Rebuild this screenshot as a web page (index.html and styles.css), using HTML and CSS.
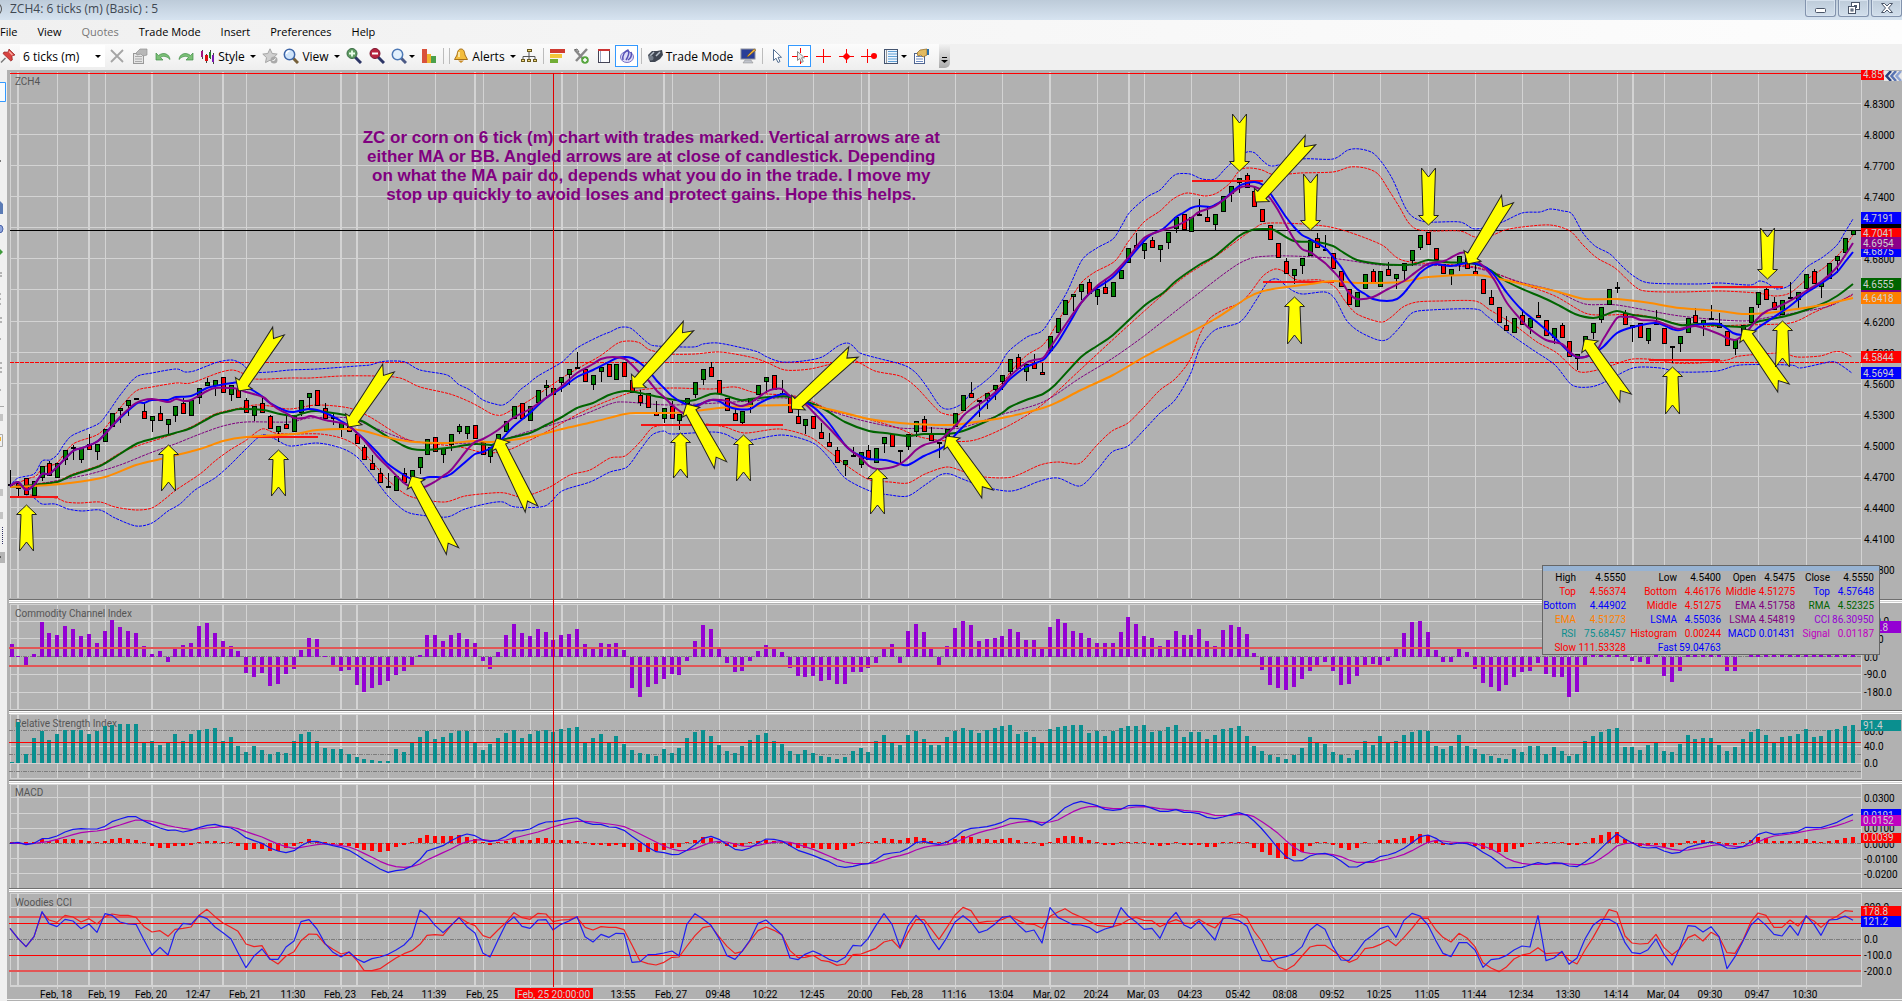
FILE: index.html
```html
<!DOCTYPE html>
<html lang="en">
<head>
  <meta charset="UTF-8" />
  <meta name="viewport" content="width=device-width, initial-scale=1.0"/>
  <title>ZCH4: 6 ticks (m) (Basic) : 5</title>
  <link rel="stylesheet" href="styles.css">
</head>
<body>

  <header class="titlebar">
    <span class="title-ring"></span>
    <h1 class="title">ZCH4: 6 ticks (m) (Basic) : 5</h1>
    <div class="window-buttons">
      <button class="window-button" aria-label="Minimize">
        <svg width="14" height="12" viewBox="0 0 14 12"><rect x="1.5" y="6.5" width="10" height="4" rx="1" fill="#fff" stroke="#4a5568"/></svg>
      </button>
      <button class="window-button" aria-label="Restore">
        <svg width="14" height="12" viewBox="0 0 14 12"><g fill="#fff" stroke="#4a5568"><rect x="4.5" y=".5" width="8" height="7"/><rect x="7.5" y="3.5" width="2" height="2"/><rect x="1.5" y="4.5" width="7" height="7"/><rect x="4" y="7" width="2" height="2" fill="#b7c6d6"/></g></svg>
      </button>
      <button class="window-button" aria-label="Close">
        <svg width="14" height="12" viewBox="0 0 14 12"><path d="M1.5 1.5h3l2.5 2.5 2.5-2.5h3l-4 4.500 4 4.500h-3l-2.500-2.500-2.500 2.500h-3l4-4.500z" fill="#fff" stroke="#4a5568"/></svg>
      </button>
    </div>
  </header>

  <nav class="menubar">
    <a href="#">File</a>
    <a href="#">View</a>
    <a href="#" class="disabled">Quotes</a>
    <a href="#">Trade Mode</a>
    <a href="#">Insert</a>
    <a href="#">Preferences</a>
    <a href="#">Help</a>
  </nav>

  <div class="toolbar">
    <button class="tool pin" aria-label="Pin">
      <svg viewBox="0 0 16 16"><path d="M9 1l6 6-2 .5-1 1 .3 3.5-1.5 1L3 5.5 4 4l3.500.2L8.500 3z" fill="#d8433f" stroke="#8e1d1d" stroke-width=".7"/><path d="M5.5 10L1 14.5" stroke="#777" stroke-width="1.5"/><path d="M9 3.5l3.5 3.5" stroke="#f7a8a0" stroke-width="1.5"/></svg>
    </button>
    <div class="interval">
      <select aria-label="Interval"><option>6 ticks (m)</option></select>
    </div>
    <button class="tool" aria-label="Delete">
      <svg viewBox="0 0 16 16"><path d="M2 2l12 12M14 2L2 14" stroke="#a5a5a5" stroke-width="1.8"/></svg>
    </button>
    <button class="tool" aria-label="Properties">
      <svg viewBox="0 0 16 16"><rect x="1.5" y="5.5" width="10" height="10" fill="#e4e4e4" stroke="#999"/><path d="M3 8.5h7M3 11h7M3 13.5h7" stroke="#aaa"/><path d="M4 5l4-4h7v6l-4 1-2-2-4 1z" fill="#b8b8b8" stroke="#929292" stroke-width=".7"/></svg>
    </button>
    <button class="tool" aria-label="Undo">
      <svg viewBox="0 0 16 16"><path d="M1 5v7h7l-2.500-2.500c2.500-2 6-1.500 9.500 2-.5-5.500-6.500-8-11.500-4z" fill="#7cc077" stroke="#3f8c46" stroke-width=".7"/></svg>
    </button>
    <button class="tool" aria-label="Redo">
      <svg viewBox="0 0 16 16"><path d="M15 5v7H8l2.500-2.500c-2.500-2-6-1.500-9.500 2 .5-5.500 6.500-8 11.500-4z" fill="#7cc077" stroke="#3f8c46" stroke-width=".7"/></svg>
    </button>
    <button class="tool labelled">
      <svg viewBox="0 0 16 16"><path d="M3.500 2v9M7.500 6v9M11.500 2v9M14.500 5v11" stroke="#444"/><path d="M2 3h2v6H2z" fill="#a1187e"/><path d="M6 7h3v6H6z" fill="#d11"/><path d="M10 4h2v6h-2z" fill="#20842a"/><path d="M13 7h2v7h-2z" fill="#7a1bb0"/></svg>
      Style <i class="caret"></i>
    </button>
    <button class="tool" aria-label="Favourite">
      <svg viewBox="0 0 16 16"><path d="M8 .8l2.2 4.700 5 .6-3.700 3.500 1 5L8 12.200l-4.500 2.400 1-5L.8 6.100l5-.6z" fill="#d0d0d0" stroke="#a5a5a5"/><circle cx="12" cy="12" r="3.5" fill="#aaa"/><path d="M10.5 12l1 1 2-2.500" stroke="#fff" fill="none"/></svg>
    </button>
    <button class="tool labelled">
      <svg viewBox="0 0 16 16"><path d="M10 10l5 5" stroke="#76603a" stroke-width="3"/><circle cx="6.5" cy="6.5" r="5.2" fill="#cfe4fa" stroke="#3e66a8" stroke-width="1.5"/><path d="M3.5 6a3 3 0 0 1 3-3" stroke="#fff" stroke-width="1.5" fill="none"/></svg>
      View <i class="caret"></i>
    </button>
    <button class="tool" aria-label="Zoom in">
      <svg viewBox="0 0 16 16"><path d="M9 9l6 6" stroke="#2c3566" stroke-width="3"/><circle cx="6" cy="5.5" r="5" fill="#5f9b62" stroke="#3b6c46"/><path d="M3 5.5h6M6 2.5v6" stroke="#eaffea" stroke-width="1.8"/></svg>
    </button>
    <button class="tool" aria-label="Zoom out">
      <svg viewBox="0 0 16 16"><path d="M9 9l6 6" stroke="#2c3566" stroke-width="3"/><circle cx="6" cy="5.5" r="5" fill="#b9243f" stroke="#7c1731"/><path d="M3 5.5h6" stroke="#fff" stroke-width="2"/></svg>
    </button>
    <button class="tool narrow-menu" aria-label="Zoom">
      <svg viewBox="0 0 16 16"><path d="M10 10l5 5" stroke="#4c5a86" stroke-width="3"/><circle cx="6.5" cy="6.5" r="5.2" fill="#e3f1fd" stroke="#4c78b5" stroke-width="1.5"/></svg>
      <i class="caret"></i>
    </button>
    <button class="tool" aria-label="Volume">
      <svg viewBox="0 0 16 16"><path d="M1 1h5v14H1z" fill="#d9513b"/><path d="M6 6h4v9H6z" fill="#efb52e"/><path d="M10 8h5v7h-5z" fill="#4ca04a"/></svg>
    </button>
    <span class="separator"></span>
    <span class="separator"></span>
    <button class="tool labelled alerts">
      <svg viewBox="0 0 16 16"><path d="M8 1c3 0 3.500 3 4 6l2.500 4.500h-13L4 7c.5-3 1-6 4-6z" fill="#f3bd3d" stroke="#a6701a"/><path d="M5 12.500h6L8 15z" fill="#c98a26"/><path d="M6 4v5" stroke="#fff3bf" stroke-width="1.5"/></svg>
      Alerts <i class="caret"></i>
    </button>
    <button class="tool" aria-label="Hierarchy">
      <svg viewBox="0 0 16 16"><path d="M8 3v6M2 11V8.500h12V11M8 8v3" stroke="#555" fill="none"/><g fill="#f1d77b" stroke="#6b5b20"><rect x="6.500" y="1.500" width="4" height="2"/><rect x=".5" y="11.500" width="3" height="2"/><rect x="6.500" y="11.500" width="3" height="2"/><rect x="12.500" y="11.500" width="3" height="2"/></g></svg>
    </button>
    <span class="separator"></span>
    <button class="tool" aria-label="Levels">
      <svg viewBox="0 0 16 16"><path d="M0 1h15v4H0z" fill="#cf3a30"/><path d="M0 6h12v4H0z" fill="#f2c63b"/><path d="M0 11h8v4H0z" fill="#71ad35"/></svg>
    </button>
    <button class="tool" aria-label="Add tool">
      <svg viewBox="0 0 16 16"><path d="M2 2l9 10M14 1L3 13" stroke="#888" stroke-width="2.5"/><path d="M1 2l3-1 2 3" stroke="#666" fill="none"/><circle cx="12" cy="12" r="3.8" fill="#56a53e"/><path d="M10 12h4M12 10v4" stroke="#fff" stroke-width="1.5"/></svg>
    </button>
    <button class="tool" aria-label="Notebook">
      <svg viewBox="0 0 16 16"><rect x="2.5" y="1.5" width="11" height="13" fill="#fdfdff" stroke="#445"/><path d="M2 2h12" stroke="#c33" stroke-width="2"/><path d="M4.500 3v11" stroke="#9aa5c0"/></svg>
    </button>
    <button class="tool selected" aria-label="Lock scale">
      <svg viewBox="0 0 16 16"><ellipse cx="8" cy="9" rx="6.5" ry="5.5" fill="#dedcf7" stroke="#7a74c9"/><path d="M4 12c-1-5 2-9 5-10 2 2 0 7-2 10M9 12c3-2 4-5 3-8" fill="none" stroke="#5650b5" stroke-width="1.5"/></svg>
    </button>
    <span class="separator"></span>
    <button class="tool labelled trade">
      <svg viewBox="0 0 16 16"><path d="M1 7l4-4 5 0 5-1 1 5-3 4-5 3-5 0z" fill="#3f4652"/><path d="M3 8l4-4M9 8l4-4" stroke="#b7c0cb" stroke-width="1.5"/><circle cx="4" cy="10" r="2.5" fill="#737c88"/></svg>
      Trade Mode
    </button>
    <button class="tool" aria-label="Display">
      <svg viewBox="0 0 16 16"><rect x="1" y="1" width="14" height="10" fill="#2a3e97" stroke="#8b8f9b"/><path d="M5 12h6l2 3H3z" fill="#c0c3cc" stroke="#888" stroke-width=".5"/><path d="M14 1L8 7l-1 2 2-1 7-6z" fill="#f0b43c" stroke="#7b5517" stroke-width=".5"/></svg>
    </button>
    <span class="separator"></span>
    <button class="tool" aria-label="Pointer">
      <svg viewBox="0 0 16 16"><path d="M4.500 1.500v11l2.500-2.300 2 4.300 2-1-2-4.200h3.500z" fill="#fff" stroke="#536e91"/></svg>
    </button>
    <button class="tool selected" aria-label="Pointer crosshair">
      <svg viewBox="0 0 16 16"><path d="M8.500 0v5M8.500 11v5M0 8.500h5M12 8.500h4" stroke="#f00"/><path d="M5.500 3.500v9l2.200-2 1.800 4 1.800-1-1.800-3.700h3z" fill="#eee" stroke="#888"/></svg>
    </button>
    <button class="tool" aria-label="Crosshair">
      <svg viewBox="0 0 16 16"><path d="M8.500 1v14M1 8.500h15" stroke="#f00"/></svg>
    </button>
    <button class="tool" aria-label="Crosshair center">
      <svg viewBox="0 0 16 16"><path d="M8.500 1v14M1 8.500h15" stroke="#f00"/><path d="M8.500 4.500l4 4-4 4-4-4z" fill="#f00"/></svg>
    </button>
    <button class="tool" aria-label="Crosshair right">
      <svg viewBox="0 0 16 16"><path d="M6.500 1v14M0 8.500h14" stroke="#f00"/><circle cx="13" cy="8" r="3" fill="#f00"/></svg>
    </button>
    <button class="tool narrow-menu" aria-label="Template">
      <svg viewBox="0 0 16 16"><rect x="1.5" y="1.5" width="13" height="14" fill="#eef5fd" stroke="#44546f"/><path d="M5 3.500h9M5 6h9M5 8.500h9M5 11h9M5 13.500h9" stroke="#5fa0d6"/><path d="M3.500 2v13" stroke="#999"/></svg>
      <i class="caret"></i>
    </button>
    <button class="tool" aria-label="Chart properties">
      <svg viewBox="0 0 16 16"><rect x="1.5" y="5.5" width="10" height="10" fill="#fff" stroke="#4f648f"/><path d="M3 8.500h7M3 11h7M3 13.500h7" stroke="#6c8ac0"/><path d="M4 5l3-3 7-1v6l-4 2-2-2-3 1z" fill="#e2bb62" stroke="#8b6420" stroke-width=".7"/><path d="M14 1h2v6h-2z" fill="#2b6fa8"/></svg>
    </button>
    <button class="overflow" aria-label="More">
      <svg viewBox="0 0 11 22"><path d="M3 13.500h5" stroke="#000"/><path d="M2 16h7l-3.500 3z"/></svg>
    </button>
  </div>

  <main class="workspace">
    <aside class="sidebar">
      <svg width="7" height="520" viewBox="0 0 7 520">
        <path d="M0 12.500h5.500v19H0" fill="#f7fbff" stroke="#3399ff"/>
        <path d="M0 91h1" stroke="#000"/>
        <path d="M0 131l3 3v10H0z" fill="#5b7bb5"/>
        <circle cx="-1" cy="159" r="4" fill="#8fa5dc" stroke="#4a62a8"/>
        <path d="M0 179l3 3-3 3z" fill="#3e9a3b"/>
        <path d="M0 203h2M0 206h2M0 224h1M0 229h1M0 234h1M0 248h2M0 252h2M0 269h1M0 293h2M0 298h2M0 302h2M0 320h1" stroke="#777"/>
        <path d="M0 336.500h4M0 364.500h2.500v12H0" fill="none" stroke="#aaa"/>
        <path d="M0 367h1v4H0z" fill="#f0b030"/>
        <path d="M0 344h3v7H0zM0 419h3v7H0zM0 442h3v7H0z" fill="#c4c4c4"/>
        <path d="M2.500 457v17" stroke="#336" stroke-dasharray="1 1"/>
        <path d="M0 482h5v11H0z" fill="#b5b5b5"/><path d="M0 487h1" stroke="#000"/>
      </svg>
    </aside>

    <section class="charts">
      <svg class="panel price" id="pricePanel"></svg>
      <div class="splitter"></div>
      <svg class="panel cci" id="cciPanel"></svg>
      <div class="splitter"></div>
      <svg class="panel rsi" id="rsiPanel"></svg>
      <div class="splitter"></div>
      <svg class="panel macd" id="macdPanel"></svg>
      <div class="splitter"></div>
      <svg class="panel woodies" id="woodiesPanel"></svg>
      <svg class="panel time" id="timePanel"></svg>

      <div class="crosshair"></div>

      <p class="note">ZC or corn on 6 tick (m) chart with trades marked. Vertical arrows are at<br>either MA or BB. Angled arrows are at close of candlestick. Depending<br>on what the MA pair do, depends what you do in the trade. I move my<br>stop up quickly to avoid loses and protect gains. Hope this helps.</p>

      <button class="expand" aria-label="Expand">
        <svg width="18" height="10" viewBox="0 0 18 10"><g fill="none" stroke-width="2.5"><path d="M7 0L2.500 5 7 10" stroke="#27407e"/><path d="M12 0L7.500 5l4.500 5" stroke="#5873b2"/><path d="M17 0l-4.500 5 4.500 5" stroke="#8da3d3"/></g></svg>
      </button>

      <div class="values">
        <table>
          <tr><th>High</th><td>4.5550</td><th>Low</th><td>4.5400</td><th>Open</th><td>4.5475</td><th>Close</th><td>4.5550</td></tr>
          <tr><th class="red">Top</th><td class="red">4.56374</td><th class="red">Bottom</th><td class="red">4.46176</td><th class="red">Middle</th><td class="red">4.51275</td><th class="blue">Top</th><td class="blue">4.57648</td></tr>
          <tr><th class="blue">Bottom</th><td class="blue">4.44902</td><th class="red">Middle</th><td class="red">4.51275</td><th class="purple">EMA</th><td class="purple">4.51758</td><th class="green">RMA</th><td class="green">4.52325</td></tr>
          <tr><th class="orange">EMA</th><td class="orange">4.51273</td><th class="blue">LSMA</th><td class="blue">4.55036</td><th class="purple">LSMA</th><td class="purple">4.54819</td><th class="violet">CCI</th><td class="violet">86.30950</td></tr>
          <tr><th class="teal">RSI</th><td class="teal">75.68457</td><th class="red">Histogram</th><td class="red">0.00244</td><th class="blue">MACD</th><td class="blue">0.01431</td><th class="magenta">Signal</th><td class="magenta">0.01187</td></tr>
          <tr><th class="red">Slow</th><td class="red">111.53328</td><th class="blue">Fast</th><td class="blue">59.04763</td><th></th><td></td><th></th><td></td></tr>
        </table>
      </div>
    </section>
  </main>

  <script src="chart.js"></script>
</body>
</html>
```

FILE: styles.css
```css
* {
  margin: 0;
  padding: 0;
  box-sizing: border-box;
}

body {
  display: flex;
  flex-direction: column;
  min-height: 100vh;
  background: #f0f0f0;
  color: #000;
  font-family: "Open Sans", "Noto Sans", sans-serif;
  font-size: 12px;
  overflow-x: hidden;
}

button {
  border: none;
  background: none;
  font: inherit;
  color: inherit;
}

/* title bar */

.titlebar {
  display: flex;
  height: 20px;
  background: linear-gradient(#bdcbd9, #d6e3f0);
}

.title-ring {
  width: 10px;
  height: 12px;
  margin: 3px 8px 0 -8px;
  border: 1px solid #555;
  border-radius: 50%;
}

.title {
  font-size: 12px;
  font-weight: normal;
  line-height: 17px;
  color: #3f4852;
}

.window-buttons {
  display: flex;
  gap: 2px;
  margin-left: auto;
}

.window-button {
  display: flex;
  align-items: center;
  justify-content: center;
  width: 31px;
  height: 17px;
  border: 1px solid #8293ad;
  border-top: none;
  border-radius: 0 0 3px 3px;
  box-shadow: inset 0 0 0 1px #d7e2ee;
}

/* menu */

.menubar {
  display: flex;
  gap: 20px;
  height: 24px;
  background: linear-gradient(90deg, #f0f0f0, #fdfdfd);
  font-size: 11px;
}

.menubar a {
  line-height: 24px;
  color: #000;
  text-decoration: none;
  white-space: nowrap;
}

.menubar .disabled {
  color: #777;
}

/* toolbar */

.toolbar {
  display: flex;
  align-items: center;
  width: 950px;
  height: 26px;
  padding-bottom: 2px;
  background: linear-gradient(#fcfcfc, #eeeeee);
}

.tool {
  display: flex;
  flex: none;
  align-items: center;
  justify-content: center;
  width: 23px;
  height: 22px;
  white-space: nowrap;
}

.tool svg {
  flex: none;
  width: 16px;
  height: 16px;
}

.tool.pin {
  width: 20px;
  justify-content: flex-start;
}

.tool.labelled {
  width: 61px;
  gap: 3px;
}

.tool.alerts {
  width: 65px;
}

.tool.trade {
  width: 92px;
}

.tool.narrow-menu {
  width: 29px;
  gap: 2px;
}

.tool.selected {
  border: 1px solid #3399ff;
  background: #fff;
}

.caret {
  border: 3px solid transparent;
  border-top-color: #000;
  border-bottom: none;
}

.tool .caret {
  margin-left: 2px;
}

.narrow-menu .caret {
  margin-left: 0;
}

.interval {
  position: relative;
  width: 85px;
  height: 22px;
  background: #fff;
}

.interval select {
  appearance: none;
  width: 100%;
  height: 22px;
  padding-left: 3px;
  border: none;
  background: none;
  font: inherit;
}

.interval::after {
  content: "";
  position: absolute;
  top: 10px;
  right: 4px;
  border: 3px solid transparent;
  border-top-color: #000;
  border-bottom: none;
  pointer-events: none;
}

.separator {
  flex: none;
  width: 1px;
  height: 16px;
  margin: 0 2px 0 3px;
  background: #bcbcbc;
}

.overflow {
  width: 11px;
  height: 24px;
  margin-left: auto;
  border-radius: 0 0 5px 0;
  background: linear-gradient(#f3f3f3, #aaa);
}

/* workspace */

.workspace {
  display: flex;
  flex: 1;
}

.sidebar {
  flex: none;
  width: 7px;
}

.charts {
  position: relative;
  flex: 1;
  min-width: 0;
  background: #b1b1b1;
}

.panel {
  display: block;
  width: 100%;
  overflow: hidden;
  font-family: Roboto, "Liberation Sans", sans-serif;
  font-size: 10px;
}

.price { height: 529px; }
.cci { height: 107px; }
.rsi { height: 66px; }
.macd { height: 104px; }
.woodies { height: 95px; }

.time {
  height: 13px;
  border-bottom: 1px solid #f0f0f0;
}

.splitter {
  height: 4px;
  margin-left: 2px;
  border-top: 1px solid #6f6f6f;
  border-bottom: 1px solid #fff;
  background: linear-gradient(#fff 50%, #d2d2d2 50%);
}

.crosshair {
  position: absolute;
  top: 3px;
  left: calc(28.84% - 1px);
  width: 1px;
  height: 914px;
  background: #e00000;
}

.note {
  position: absolute;
  top: 58px;
  left: 34%;
  transform: translateX(-50%);
  font-family: "Liberation Sans", sans-serif;
  font-size: 17px;
  font-weight: bold;
  line-height: 19px;
  text-align: center;
  white-space: nowrap;
  color: #800080;
}

.expand {
  position: absolute;
  top: 1px;
  right: 0;
  width: 18px;
  height: 10px;
  background: #e6e6e6;
}

.expand svg {
  display: block;
}

/* values window */

.values {
  position: absolute;
  top: 495px;
  right: 22px;
  width: 338px;
  height: 90px;
  border: 1px solid #666;
  border-top: 6px solid #97b3d3;
  outline: 1px solid #666;
  outline-offset: -1px;
  background: #b1b1b1;
  font-family: Roboto, "Liberation Sans", sans-serif;
  font-size: 10px;
}

.values table {
  border-collapse: collapse;
  table-layout: fixed;
  width: 331px;
}

.values th,
.values td {
  height: 14px;
  font-weight: normal;
  line-height: 14px;
  text-align: right;
  white-space: nowrap;
}

.values th:nth-child(1) { width: 33px; }
.values td:nth-child(2) { width: 50px; }
.values th:nth-child(3) { width: 51px; }
.values td:nth-child(4) { width: 44px; }
.values th:nth-child(5) { width: 35px; }
.values td:nth-child(6) { width: 39px; }
.values th:nth-child(7) { width: 35px; }
.values td:nth-child(8) { width: 44px; }

.red { color: #ff0000; }
.blue { color: #0000ff; }
.purple { color: #800080; }
.green { color: #006400; }
.orange { color: #ff8000; }
.violet { color: #9400d3; }
.teal { color: #0a8f8f; }
.magenta { color: #c000c0; }

/* chart drawing */

.grid { stroke: #d3d3d3; stroke-width: 1; }
.grid.session { stroke-width: 2; }
.zero { stroke: #7d7d7d; stroke-width: 1; stroke-dasharray: 4 1 1 1; }
.level { stroke: #ff0000; stroke-width: 1; }
.level.thick { stroke: #e25555; stroke-width: 2; }
.stop { stroke: #f51414; stroke-width: 2; }
.last { stroke: #000; stroke-width: 1; }
.cursor { stroke: #ff0000; stroke-width: 1; stroke-dasharray: 4 1; }

.line { fill: none; stroke-linejoin: round; }
.average { stroke-width: 2; }
.band { stroke-width: 1; stroke-dasharray: 3 1; }
.arrow { fill: #ffff00; stroke: #222; stroke-width: 1; }

.candle { stroke: #000; stroke-width: 1; }
.caption { fill: #555; }
.tick { fill: #000; }
.tag-text { fill: #cfcfcf; }
```

FILE: chart.js
```js
const NS = "http://www.w3.org/2000/svg";

// natural canvas: bars start at x = 10, axis starts at x = 1861
const LEFT = 7;
const AXIS = 1861;
const BARS = 235;
const STEP = 7.876;

let scale = 1;
let axisX = AXIS;

const X = x => LEFT + (x - LEFT) * scale;
const barX = i => Math.round(X(10.3 + i * STEP) - 0.3);

const sessions = [18, 89, 152, 223, 341, 357, 475, 562, 664, 869, 1050, 1129, 1633];

// body top-bottom, h = high, l = low
const candles = `
r484-486h470 r483-489h481l496 r478-495 g481-496 g466-478l481 r463-476h461 g463-478 g450-460l465 g447-448h445l460 g448-460l463
r444-450h434 g444-452l460 g429-442 g413-427 g408-411l423 g400-406l416 r398-400 r411-419h403 g416-421l432 r413-421h406
g419-425l434 g406-416l422 r403-414h398 g400-416 g388-398l404 g382-386h378 g380-386l396 r377-393 g385-395l401 r388-398
r400-413h398 g406-416l421 r403-413h398 r416-429h415 g426-432l442 r424-429h415 g416-432 g400-413l416 g393-398l408 r390-406
r408-419h403 g417-418h413l425 g423-429l437 r423-432 r434-444 r447-460h445 r463-470h455 r473-483h468 r486-488h473 g476-491
r473-483h468 g470-477 g457-468l474 g439-455 r437-452 g448-455l463 g434-445l451 g426-432h424l434 g426-434l439 r425-439
r442-455 g447-457l463 g434-440 g421-432 g406-419 r403-419 g406-421 g390-403 g385-388h380l396 g388-395
g377-383l392 g369-375l385 g367-368h352 r369-382 g375-385l390 g367-372l382 r364-377 g364-380 r362-377 r380-393
r395-403h390l406 r393-408 r412-416h401 g408-419l423 r406-419h401 g414-421l430 g398-404 g382-395l398 g369-380l385 r367-377h362
r380-394 r398-411 r413-421h408 g411-423l426 g398-407l413 g385-395 g377-382l393 r375-390 r393-395h380 r397-413
r416-424h407 g419-426l434 r416-429 r432-439h423 r442-447h433 r450-463h447 g460-465l476 g455-457h447 g452-465l468 r450-460h445
g448-463 g437-444l453 r434-447 g450-451l463 g434-447l450 g421-432l437 r419-432h416 r434-441h427 g442-444l458 g429-438
g413-427 g395-411 r393-398h382 g400-401l417 g393-399l409 g385-390l400 g375-382l390 g359-372l375 r357-369h354 g364-372l381
r363-369h354 r372-375h363 g336-351 g318-333 g300-315 g294-297l311 g284-292l300 r282-294h279 g289-297l305 r287-294h280
g282-297 g270-279 g248-263 r245-248h233 g243-251l259 r240-248h237 g245-250l262 g232-243l249 g217-229l233 r214-230
g217-232 g214-215h199 r217-222h206 g214-225l230 g196-212 g186-194l202 g178-183l193 r175-188h173 r191-207 r209-222
r225-240 r243-258 r261-274h258 g269-276l284 g258-266l274 g240-256 r238-248h233 g249-250h235 r253-269 r271-287
r289-305 g292-307 g274-289 r271-284h269 g271-287 r269-276h262 g274-279l289 g263-271l281 g250-261l266 g235-248l250
r232-245 r248-260 r264-274 g269-275l285 g256-265l271 r254-269 r271-276h264 r279-294 r297-305h290 r307-323
r325-331h316 g318-333 r315-325h310 g318-328l334 r315-318h302 r320-336 g328-338l344 r325-338h323 r341-357 g354-359l370
g336-348 g323-333l339 g307-320l323 g289-305 g287-288h282l293 r313-325h310 g325-328l342 r323-338 g328-341l344 r323-324h310
r328-344 g346-347l363 g336-344l352 g318-333 r315-323h308 g320-325l336 r318-320h305 r323-328h313 r331-346 g339-349l355
g325-333 g307-323 g292-305l308 r289-300h286 r302-310h297 g300-315 g297-298h282 g292-300l308 g274-289 r271-284h269
g283-287l298 g263-279 g256-261l273 g238-253 g230-235`.trim().split(/\s+/);

const curves = [
  { color: "#0000ff", type: "band", pts: "10,486 18,478 34,474 42,461 50,460 57,455 65,443 73,435 98,424 107,414 121,394 136,377 152,373 176,369 185,372 194,371 207,366 218,362 232,360 242,364 252,372 270,372 290,370 317,369 357,366 370,365 380,362 390,361 405,362 420,370 447,375 458,384 470,390 483,400 495,404 503,405 512,399 520,390 528,384 538,376 562,362 577,348 600,336 610,332 618,328 624,327 632,329 648,343 657,346 693,347 703,344 718,343 743,348 758,352 767,357 782,362 803,361 822,357 838,346 847,343 853,346 860,353 877,358 897,363 908,367 917,374 927,387 940,406 950,409 963,403 972,391 983,383 997,370 1008,352 1027,337 1042,331 1053,315 1067,292 1082,260 1097,248 1113,239 1122,225 1130,212 1147,197 1160,190 1170,179 1177,174 1190,174 1202,179 1215,179 1225,169 1237,158 1247,152 1255,153 1263,161 1273,166 1302,159 1333,159 1348,150 1360,149 1373,153 1383,164 1393,180 1405,207 1413,217 1427,222 1460,222 1475,229 1500,223 1522,213 1540,212 1550,209 1563,211 1572,214 1583,233 1595,246 1610,254 1623,267 1635,277 1650,283 1697,284 1720,283 1750,285 1759,281 1767,283 1777,289 1790,285 1807,267 1823,257 1837,245 1845,232 1853,219" },
  { color: "#ff0000", type: "band", pts: "10,486 30,478 36,476 44,467 57,463 73,444 100,433 120,408 136,391 152,387 176,383 191,383 218,373 232,370 242,373 255,379 290,378 310,378 341,376 375,376 400,378 420,387 450,394 470,402 483,409 492,414 502,415 515,408 530,400 562,378 577,369 600,356 618,343 630,341 640,343 650,350 670,354 695,354 720,352 750,357 766,362 785,370 810,369 835,363 853,360 875,371 900,376 915,386 930,402 940,412 950,415 960,414 975,401 1000,385 1012,370 1027,355 1043,345 1055,327 1070,300 1082,282 1095,272 1115,261 1128,242 1144,222 1160,211 1173,199 1187,193 1205,196 1217,193 1230,183 1240,170 1250,168 1262,170 1275,175 1300,173 1333,172 1350,167 1365,168 1378,174 1390,192 1400,208 1408,222 1416,229 1430,231 1460,231 1475,237 1490,236 1505,230 1522,227 1550,225 1570,231 1583,245 1597,258 1615,268 1633,285 1645,291 1680,292 1720,291 1757,293 1775,296 1790,293 1806,280 1825,267 1840,253 1853,235" },
  { color: "#ff0000", type: "band", pts: "26,494 36,496 56,498 66,502 80,503 100,502 115,507 136,510 152,508 165,499 176,490 200,474 215,461 230,450 245,441 262,429 275,433 290,434 320,434 341,438 357,446 372,462 388,480 405,494 420,499 445,502 465,496 492,493 505,493 520,497 530,495 550,487 570,475 590,470 610,458 625,456 640,442 652,428 665,425 680,425 705,424 725,427 745,433 780,429 810,437 830,452 850,468 870,480 890,482 908,483 925,474 947,467 965,472 985,477 1012,477 1040,465 1058,462 1075,464 1083,461 1097,445 1112,431 1128,423 1144,407 1160,390 1175,379 1190,360 1200,334 1210,318 1225,309 1240,303 1250,293 1263,276 1275,269 1285,272 1297,280 1320,280 1335,287 1345,301 1357,314 1380,322 1390,318 1403,307 1417,302 1440,301 1475,301 1490,310 1513,324 1537,342 1557,353 1577,371 1593,371 1613,365 1633,359 1660,360 1673,363 1700,363 1727,360 1740,356 1780,353 1797,357 1820,356 1833,352 1842,352 1852,357" },
  { color: "#0000ff", type: "band", pts: "26,496 34,498 42,504 55,504 68,509 82,511 100,510 115,518 136,526 152,523 168,511 180,504 195,490 215,478 230,465 245,450 262,435 275,439 290,446 317,443 341,448 357,457 372,475 388,496 405,511 420,515 447,517 465,509 490,503 503,502 515,507 545,506 562,491 590,482 610,472 627,467 640,450 652,435 664,431 672,434 711,432 725,434 743,441 782,435 813,443 830,459 845,478 870,491 890,495 908,496 925,485 940,475 950,474 965,480 985,487 1012,491 1040,481 1058,478 1080,486 1097,470 1112,452 1128,446 1144,430 1160,413 1175,400 1190,375 1200,348 1215,330 1240,322 1255,302 1267,283 1277,279 1290,289 1302,294 1325,292 1335,299 1347,321 1360,332 1378,340 1388,339 1400,327 1412,313 1430,310 1475,309 1487,316 1510,334 1533,350 1555,365 1572,385 1590,387 1605,382 1633,368 1660,368 1680,372 1717,371 1740,365 1790,365 1800,368 1820,364 1835,362 1852,373" },
  { color: "#ff0000", type: "band", pts: "34,484 57,481 73,474 100,465 120,453 140,445 165,437 191,427 215,414 240,408 255,405 270,406 290,409 317,405 349,408 370,417 404,438 425,443 460,447 485,453 505,451 520,445 550,430 580,413 610,400 640,390 672,388 711,389 735,387 757,393 800,397 830,410 860,417 895,427 920,437 947,441 975,440 1010,425 1043,404 1080,370 1130,324 1180,280 1215,257 1252,230 1270,223 1330,227 1380,244 1405,261 1475,267 1520,283 1555,296 1585,313 1605,315 1640,315 1690,326 1742,325 1790,323 1815,312 1853,295" },
  { color: "#800080", type: "band", pts: "34,485 60,480 90,474 120,465 150,453 175,444 200,434 223,426 246,422 290,422 310,418 349,418 375,428 404,439 430,443 490,442 530,431 577,417 610,404 625,402 672,405 750,401 785,398 820,408 860,420 900,428 930,428 960,428 1000,415 1043,402 1080,378 1113,358 1144,336 1190,300 1240,263 1270,256 1330,258 1380,265 1420,265 1475,268 1520,282 1555,291 1585,304 1617,305 1680,316 1742,321 1770,317 1800,312 1830,306 1853,294" },
  { color: "#006400", type: "average", pts: "10,487 34,485 57,482 73,475 100,466 120,454 136,444 152,439 175,433 191,428 215,415 230,411 240,409 263,410 280,414 294,416 304,413 317,411 349,416 364,422 388,437 404,446 412,449 424,450 447,448 475,444 492,445 502,440 530,433 546,425 562,417 577,408 593,403 609,395 625,391 640,393 664,398 683,401 695,400 711,394 720,394 740,400 750,399 770,397 790,397 820,407 845,422 869,431 885,433 908,436 924,434 947,434 963,431 987,421 1002,413 1010,407 1026,400 1043,394 1055,385 1081,357 1097,346 1113,335 1144,306 1163,293 1176,281 1199,265 1215,256 1239,236 1252,230 1263,229 1274,230 1294,241 1317,242 1333,246 1341,251 1357,260 1380,264 1400,265 1415,264 1428,260 1444,262 1475,264 1490,270 1504,280 1520,288 1546,299 1560,306 1575,314 1593,318 1605,315 1617,311 1633,315 1656,318 1680,325 1700,324 1742,327 1760,321 1790,315 1822,304 1837,296 1853,284" },
  { color: "#ff8c00", type: "average", pts: "10,487 34,486 70,483 105,477 136,465 165,458 200,449 223,441 246,437 294,434 317,430 349,429 364,431 390,438 415,442 447,443 475,441 492,442 530,437 562,429 593,422 625,414 640,413 672,413 695,411 719,408 750,406 790,405 813,406 845,413 869,419 900,423 950,425 975,422 1002,418 1043,408 1060,401 1081,390 1113,375 1144,357 1176,340 1215,319 1247,298 1263,291 1286,287 1310,284 1333,281 1360,283 1400,282 1428,277 1475,275 1500,279 1522,284 1555,291 1585,299 1617,299 1650,303 1680,308 1719,311 1742,314 1767,313 1790,310 1822,305 1853,298" },
  { color: "#0000ff", type: "average", pts: "10,486 18,482 26,490 34,485 42,474 49,474 57,467 73,451 82,448 98,441 113,425 136,404 144,403 152,400 168,400 176,397 191,396 207,388 220,385 232,383 238,383 254,391 263,397 270,403 286,411 294,412 308,409 317,410 330,415 341,421 349,426 364,439 377,452 388,464 404,475 412,479 420,479 430,477 443,477 451,474 463,464 475,454 483,452 492,447 502,439 513,427 530,413 546,398 562,388 577,377 593,370 609,362 617,358 625,357 632,358 640,363 648,370 657,381 664,388 672,396 683,403 693,406 703,403 711,400 719,401 727,406 737,409 750,409 758,404 770,398 783,394 790,396 807,403 817,410 829,423 845,445 853,452 861,456 869,459 885,460 900,464 908,465 924,456 940,449 948,443 957,433 970,420 987,403 1002,388 1010,379 1026,367 1043,360 1050,352 1058,342 1070,322 1081,303 1089,294 1097,288 1113,277 1128,260 1144,241 1152,234 1163,229 1176,217 1183,213 1191,208 1199,206 1210,207 1215,205 1223,200 1231,193 1239,186 1247,183 1255,182 1263,185 1270,193 1278,205 1286,217 1294,227 1302,235 1310,239 1325,248 1333,257 1341,267 1349,280 1357,289 1365,294 1373,299 1387,301 1397,299 1404,293 1412,283 1420,273 1428,267 1436,264 1451,266 1467,263 1477,264 1487,268 1495,276 1507,293 1522,310 1538,323 1554,337 1570,353 1577,357 1585,357 1593,354 1603,347 1617,333 1633,327 1656,323 1672,329 1680,330 1696,325 1719,324 1733,333 1742,335 1750,334 1759,327 1774,317 1790,306 1806,293 1822,283 1837,272 1845,262 1853,252" },
  { color: "#8b008b", type: "average", pts: "10,486 18,482 26,490 34,485 42,474 49,474 57,467 73,451 82,448 98,441 113,425 120,417 136,403 152,399 168,402 176,399 184,401 191,400 207,391 215,388 230,388 238,389 246,392 263,397 270,403 278,409 286,413 294,418 304,418 311,416 325,420 341,423 349,426 357,433 364,440 377,456 388,467 404,483 412,487 424,487 436,481 443,476 451,470 467,450 475,442 483,439 498,430 513,418 530,409 546,398 562,386 577,373 593,364 601,359 613,357 625,359 632,365 640,373 648,380 657,391 664,397 672,405 683,413 690,412 703,403 711,400 727,401 740,406 750,403 766,392 774,389 782,389 790,396 803,402 817,416 829,428 845,445 853,452 861,458 869,466 877,469 893,467 900,464 908,458 916,450 924,445 940,440 948,433 957,424 963,416 970,410 987,399 1002,386 1010,376 1026,363 1034,360 1043,358 1050,348 1066,324 1081,303 1097,286 1113,274 1128,258 1144,238 1160,231 1176,226 1191,218 1199,212 1215,206 1231,194 1239,188 1247,186 1255,187 1263,191 1270,198 1278,210 1286,225 1294,239 1302,249 1310,252 1317,257 1325,263 1333,271 1341,280 1349,293 1357,299 1373,297 1388,289 1404,281 1412,275 1420,269 1428,264 1444,261 1452,257 1460,253 1466,253 1476,260 1487,270 1495,281 1507,303 1522,321 1530,329 1546,340 1562,344 1570,352 1577,357 1585,357 1597,350 1604,338 1617,318 1625,317 1633,317 1641,320 1656,321 1672,327 1680,329 1696,326 1719,334 1727,338 1735,340 1742,336 1750,328 1759,317 1767,311 1782,305 1798,296 1806,291 1822,281 1837,267 1853,243" }
];

// x1, x2, y
const stops = [[10, 58, 497], [247, 318, 437], [641, 783, 425], [1192, 1263, 181], [1263, 1334, 282], [1649, 1720, 360], [1712, 1783, 287]];

// tip x, tip y, tail x, tail y
const arrows = [
  [26, 505, 26, 551], [168, 445, 168, 491], [278, 450, 278, 496], [238, 391, 278, 331], [348, 427, 388, 368], [411, 476, 452, 551],
  [496, 438, 531, 509], [632, 388, 688, 326], [686, 404, 720, 465], [680, 433, 680, 478], [743, 435, 743, 481], [791, 409, 853, 352],
  [877, 469, 877, 514], [946, 436, 987, 494], [1239, 171, 1239, 114], [1255, 202, 1310, 140], [1310, 230, 1310, 174], [1294, 297, 1294, 344],
  [1428, 225, 1428, 168], [1467, 264, 1507, 199], [1767, 279, 1767, 228], [1672, 367, 1672, 414], [1584, 339, 1625, 398],
  [1742, 329, 1783, 388], [1782, 321, 1782, 367]
];

const cci = [
  13, 1, -9, 3, 35, 24, 22, 31, 28, 21, 23, 14, 26, 37, 30, 26, 24, 11, 3, 6, -5, 9, 12, 14, 31, 34, 24, 16, 11, 6,
  -16, -20, -16, -29, -27, -17, -12, 7, 19, 18, 1, -8, -14, -13, -28, -35, -31, -28, -24, -18, -14, -10, 2, 22, 22, 16, 22, 24, 18, 14,
  -4, -12, 5, 22, 33, 24, 21, 28, 25, 17, 22, 23, 28, 13, 8, 14, 13, 14, 7, -31, -40, -30, -27, -22, -17, -18, -4, 16, 32, 28,
  8, -6, -15, -14, -4, 6, 12, 9, 5, -11, -19, -20, -19, -24, -23, -27, -27, -15, -15, -11, -6, 8, 13, -6, 26, 33, 25, 9, -8, 11,
  29, 36, 32, 16, 18, 19, 21, 28, 25, 17, 17, 10, 30, 38, 34, 26, 24, 19, 14, 14, 14, 25, 40, 33, 21, 19, 11, 17, 26, 22,
  22, 28, 16, 11, 27, 32, 30, 23, 4, -13, -28, -31, -33, -30, -22, -14, -8, -5, -14, -28, -27, -19, -10, -7, -9, -4, 8, 24, 35, 36,
  25, 7, -5, -5, 10, 5, -12, -26, -30, -34, -28, -20, -15, -14, -6, -17, -20, -20, -40, -35, -10, 12, 20, 26, 22, 8, -4, -5, -7, 2,
  -19, -25, -14, 6, 8, 7, 9, 6, -14, -14, 0, 9, 17, 14, 5, 8, 11, 14, 20, 10, 9, 18, 22, 26, 25
];

const rsi = [
  1, 41, 9, 25, 32, 23, 29, 33, 33, 33, 29, 32, 37, 38, 39, 39, 39, 20, 22, 18, 20, 29, 22, 29, 33, 34, 35, 22, 26, 17,
  11, 17, 13, 9, 11, 10, 22, 29, 31, 22, 15, 14, 14, 9, 6, 4, 3, 2, 2, 14, 11, 20, 26, 32, 24, 26, 30, 32, 32, 20,
  13, 19, 25, 30, 33, 25, 29, 32, 33, 31, 34, 35, 36, 20, 25, 29, 20, 27, 19, 13, 10, 9, 7, 14, 10, 15, 25, 31, 33, 27,
  18, 12, 10, 17, 23, 28, 30, 22, 19, 12, 9, 13, 10, 7, 6, 4, 6, 12, 15, 11, 22, 28, 20, 18, 28, 32, 24, 18, 18, 26,
  32, 35, 33, 30, 33, 35, 37, 38, 29, 31, 26, 20, 34, 36, 37, 38, 38, 30, 32, 27, 32, 35, 37, 37, 38, 31, 32, 36, 38, 26,
  31, 31, 24, 28, 34, 35, 37, 27, 17, 12, 8, 6, 4, 8, 15, 26, 20, 19, 11, 8, 5, 13, 22, 18, 27, 20, 22, 28, 31, 33,
  32, 17, 14, 17, 28, 17, 14, 9, 7, 5, 4, 14, 11, 17, 17, 9, 16, 12, 7, 9, 22, 27, 31, 34, 35, 16, 16, 13, 18, 20,
  12, 11, 19, 28, 24, 25, 25, 18, 12, 16, 24, 31, 34, 28, 20, 26, 27, 29, 34, 26, 27, 33, 34, 37, 38
];

const histogram = [
  1, 1, 1, 1, 4, 2, 3, 4, 4, 3, 2, 1, 2, 4, 5, 4, 3, 1, -3, -5, -5, -3, -3, -2, 1, 2, 2, 1, 1, -3,
  -7, -6, -6, -8, -8, -5, -3, 1, 4, 2, 1, -1, -2, -3, -5, -7, -8, -9, -8, -4, -2, 1, 5, 8, 7, 7, 7, 8, 6, 4,
  1, -2, 1, 2, 5, 3, 3, 5, 5, 3, 3, 3, 2, 1, -2, -2, -3, -2, -4, -7, -9, -9, -8, -7, -5, -4, 1, 3, 6, 5,
  2, -3, -4, -3, 1, 2, 3, 2, 1, -3, -5, -5, -5, -6, -6, -7, -6, -3, 1, 1, 2, 5, 4, 3, 5, 6, 5, 2, 1, 2,
  4, 7, 6, 4, 4, 3, 4, 5, 3, 1, 1, -3, 1, 5, 7, 7, 6, 3, 1, -2, -2, 1, 1, 1, 1, -2, -3, -2, 1, -2,
  -2, -2, -4, -4, 1, 1, 1, 1, -5, -9, -12, -15, -16, -13, -9, -3, 1, 1, -2, -5, -7, -5, 1, 0, 3, 3, 4, 5, 7, 9,
  8, 2, -2, -1, 1, 1, -3, -6, -7, -9, -9, -6, -4, -1, 1, 1, 1, 1, -2, -2, 1, 5, 8, 11, 11, 4, 1, -3, -3, -2,
  -4, -4, -2, 2, 2, 3, 2, 1, -3, -2, 1, 3, 6, 5, 2, 2, 2, 2, 4, 2, 1, 2, 3, 5, 6
];

// line levels below are thirds of a pixel, measured down from y = 590
const macd = [
  760, 757, 764, 760, 746, 745, 738, 726, 718, 716, 717, 717, 709, 695, 687, 680, 680, 693, 704, 714, 721, 720, 726, 721, 713, 706, 703, 710, 714, 725,
  743, 752, 760, 774, 783, 788, 782, 767, 755, 754, 761, 767, 772, 781, 795, 809, 823, 837, 847, 842, 839, 828, 808, 783, 775, 767, 752, 740, 732, 737,
  750, 755, 750, 739, 723, 722, 717, 704, 696, 695, 691, 686, 684, 697, 703, 703, 711, 712, 721, 739, 755, 772, 785, 788, 794, 793, 781, 764, 745, 739,
  748, 763, 778, 781, 774, 760, 747, 748, 753, 767, 781, 788, 796, 806, 815, 828, 832, 829, 823, 821, 809, 793, 789, 786, 775, 758, 754, 760, 763, 756,
  742, 723, 715, 713, 710, 704, 697, 685, 686, 688, 695, 706, 690, 672, 653, 641, 634, 640, 647, 658, 661, 658, 647, 646, 647, 655, 664, 664, 659, 667,
  667, 671, 682, 686, 681, 674, 668, 676, 693, 717, 745, 775, 800, 813, 812, 798, 792, 790, 798, 813, 831, 831, 818, 812, 800, 795, 787, 775, 758, 740,
  735, 745, 759, 763, 759, 761, 770, 787, 800, 818, 834, 833, 832, 825, 818, 823, 818, 820, 828, 830, 816, 798, 775, 752, 732, 747, 758, 771, 774, 772,
  783, 790, 787, 772, 766, 760, 756, 762, 774, 775, 770, 755, 733, 726, 733, 731, 728, 724, 712, 713, 713, 705, 697, 684, 673
];

const signal = [
  760, 760, 761, 760, 757, 754, 748, 741, 734, 728, 725, 723, 719, 712, 705, 697, 690, 691, 694, 700, 707, 711, 715, 718, 717, 714, 712, 709, 711, 716,
  725, 733, 741, 752, 762, 770, 775, 772, 768, 764, 762, 764, 767, 771, 780, 790, 802, 814, 824, 830, 832, 830, 822, 810, 799, 788, 777, 764, 755, 750,
  749, 752, 752, 750, 744, 738, 732, 726, 718, 711, 704, 699, 694, 694, 696, 699, 702, 705, 710, 720, 732, 744, 756, 768, 777, 782, 781, 776, 766, 757,
  754, 756, 762, 768, 769, 766, 761, 757, 755, 757, 763, 770, 778, 788, 798, 808, 816, 820, 821, 821, 818, 810, 802, 797, 790, 780, 772, 768, 766, 764,
  758, 747, 736, 728, 721, 716, 710, 702, 697, 695, 694, 698, 696, 690, 678, 665, 655, 650, 650, 653, 656, 656, 654, 651, 650, 652, 656, 658, 658, 661,
  663, 665, 670, 676, 677, 676, 673, 674, 680, 695, 712, 730, 752, 772, 786, 790, 792, 791, 794, 800, 810, 817, 817, 817, 812, 807, 801, 793, 782, 769,
  757, 751, 753, 756, 758, 757, 760, 768, 777, 790, 804, 814, 820, 823, 823, 822, 821, 820, 822, 824, 824, 818, 805, 788, 768, 761, 759, 762, 766, 768,
  772, 778, 781, 780, 776, 772, 767, 764, 766, 769, 770, 765, 756, 745, 738, 735, 732, 728, 723, 719, 717, 713, 707, 699, 690
];

const fast = [
  1015, 1045, 1070, 1040, 965, 1001, 1010, 988, 993, 1016, 1002, 1027, 971, 976, 996, 1002, 1003, 1050, 1095, 1072, 1095, 1030, 1000, 1003, 977, 986, 1011, 1028, 1047, 1088,
  1133, 1098, 1077, 1108, 1108, 1071, 1053, 995, 989, 1017, 1060, 1087, 1101, 1086, 1107, 1117, 1106, 1101, 1093, 1080, 1065, 1040, 960, 976, 1006, 1028, 1006, 983, 1010, 1029,
  1090, 1101, 1050, 1001, 981, 1009, 1015, 990, 989, 1020, 1003, 993, 980, 1040, 1056, 1033, 1042, 1030, 1031, 1117, 1115, 1094, 1093, 1089, 1083, 1097, 1002, 971, 987, 1006,
  1045, 1097, 1108, 1084, 1050, 1000, 990, 1012, 1035, 1104, 1109, 1093, 1083, 1094, 1108, 1116, 1102, 1066, 1068, 1046, 1006, 971, 1003, 1072, 1008, 976, 1001, 1045, 1079, 1042,
  996, 977, 996, 1028, 1020, 1002, 982, 978, 1004, 1026, 1020, 1059, 953, 982, 992, 1004, 1005, 1012, 1028, 1017, 1010, 953, 978, 996, 1018, 1015, 1045, 993, 967, 1005,
  1015, 993, 1022, 1050, 984, 985, 992, 1009, 1060, 1111, 1114, 1105, 1100, 1091, 1070, 1020, 1003, 1018, 1070, 1110, 1111, 1085, 1052, 1035, 1016, 1008, 1042, 991, 970, 978,
  1005, 1053, 1090, 1100, 1058, 1058, 1080, 1132, 1109, 1106, 1097, 1080, 1068, 1071, 977, 1112, 1104, 1084, 1123, 1104, 1047, 1006, 988, 988, 1001, 1058, 1088, 1091, 1079, 1047,
  1093, 1125, 1072, 1007, 1009, 1026, 1010, 1040, 1136, 1100, 1053, 1005, 985, 1006, 1033, 1038, 1006, 1036, 977, 1003, 1036, 990, 988, 978, 991
];

const slow = [
  1015, 1045, 1070, 1040, 968, 990, 997, 976, 981, 996, 986, 1002, 980, 972, 976, 976, 982, 1010, 1026, 1022, 1039, 1018, 1015, 1011, 976, 958, 980, 999, 1012, 1024,
  1062, 1070, 1067, 1107, 1122, 1098, 1085, 1052, 1032, 1033, 1062, 1078, 1092, 1086, 1112, 1141, 1142, 1136, 1120, 1104, 1091, 1082, 1063, 1036, 1034, 1036, 1007, 982, 997, 1007,
  1037, 1044, 1020, 997, 968, 983, 988, 970, 972, 995, 990, 989, 982, 1012, 1020, 1010, 1012, 1012, 1019, 1065, 1113, 1121, 1125, 1117, 1102, 1101, 1068, 1037, 1013, 1008,
  1040, 1069, 1090, 1085, 1053, 1022, 1011, 1021, 1035, 1082, 1103, 1102, 1096, 1111, 1115, 1126, 1122, 1094, 1092, 1084, 1075, 1056, 1050, 1075, 1028, 989, 989, 1016, 1048, 1012,
  975, 952, 962, 998, 994, 993, 989, 978, 991, 1002, 1003, 1015, 979, 966, 956, 971, 981, 993, 1006, 1009, 1010, 1003, 990, 982, 991, 992, 1010, 998, 989, 999,
  1001, 988, 1003, 1014, 987, 975, 972, 985, 1023, 1055, 1100, 1131, 1140, 1126, 1098, 1071, 1066, 1066, 1082, 1100, 1117, 1107, 1076, 1072, 1064, 1050, 1067, 1042, 1015, 985,
  985, 1020, 1042, 1056, 1030, 1044, 1070, 1118, 1134, 1145, 1132, 1107, 1095, 1090, 1073, 1091, 1089, 1088, 1110, 1122, 1080, 1043, 1000, 959, 966, 1038, 1059, 1062, 1060, 1033,
  1073, 1094, 1076, 1043, 1034, 1053, 1027, 1040, 1088, 1090, 1050, 995, 969, 976, 1012, 1012, 990, 1008, 981, 993, 1012, 991, 979, 962, 964
];

const dates = ["Feb, 18", "Feb, 19", "Feb, 20", "12:47", "Feb, 21", "11:30", "Feb, 23", "Feb, 24", "11:39", "Feb, 25", "", "", "13:55",
  "Feb, 27", "09:48", "10:22", "12:45", "20:00", "Feb, 28", "11:16", "13:04", "Mar, 02", "20:24", "Mar, 03", "04:23", "05:42", "08:08",
  "09:52", "10:25", "11:05", "11:44", "12:34", "13:30", "14:14", "Mar, 04", "09:30", "09:47", "10:30"];

function add(parent, name, attrs, text) {
  const node = document.createElementNS(NS, name);
  for (const key in attrs) node.setAttribute(key, attrs[key]);
  if (text !== undefined) node.textContent = text;
  parent.appendChild(node);
  return node;
}

function startPanel(id, top) {
  const svg = document.getElementById(id);
  svg.innerHTML = "";
  return add(svg, "g", { transform: `translate(${-LEFT},${-top})` });
}

function hline(g, y, cls, x1 = LEFT + 2, x2 = axisX) {
  add(g, "line", { x1, x2, y1: y, y2: y, class: cls });
}

function grid(g, top, bottom, rows) {
  rows.forEach(y => hline(g, Math.round(y) + 0.5, "grid", 10));
  for (let i = 0; i < BARS - 6; i += 6) {
    const x = barX(i) + 0.5;
    add(g, "line", { x1: x, x2: x, y1: top, y2: bottom, class: "grid" });
  }
  sessions.forEach(s => {
    const x = Math.round(X(s));
    add(g, "line", { x1: x, x2: x, y1: top, y2: bottom, class: "grid session" });
  });
  add(g, "line", { x1: axisX + 0.5, x2: axisX + 0.5, y1: top, y2: bottom, class: "grid" });
}

function bars(g, values, zero, color) {
  values.forEach((v, i) => {
    const x = Math.max(barX(i) - 2, LEFT + 3);
    add(g, "rect", { x, y: v > 0 ? zero - v : zero, width: 4, height: Math.abs(v), fill: color });
  });
}

function plotSeries(g, values, color) {
  const points = values.map((v, i) => `${barX(i)},${590 + v / 3}`).join(" ");
  add(g, "polyline", { points, class: "line", stroke: color, "stroke-width": 1.2 });
}

function smoothPath(text) {
  const p = text.split(" ").map(s => s.split(",").map(Number)).map(([x, y]) => [X(x), y]);
  let d = `M${p[0]}`;
  for (let i = 0; i < p.length - 1; i++) {
    const a = p[i - 1] || p[i], b = p[i], c = p[i + 1], e = p[i + 2] || c;
    d += `C${b[0] + (c[0] - a[0]) / 7},${b[1] + (c[1] - a[1]) / 7} ${c[0] - (e[0] - b[0]) / 7},${c[1] - (e[1] - b[1]) / 7} ${c}`;
  }
  return d;
}

function caption(g, y, text) {
  add(g, "text", { x: 15, y: y + 4, class: "caption" }, text);
}

function tick(g, y, text) {
  if (text) add(g, "text", { x: axisX + 3, y: Math.round(y) + 4, class: "tick" }, text);
}

function tag(g, top, bottom, color, text, width = 40) {
  add(g, "rect", { x: axisX, y: top, width, height: bottom - top, fill: color });
  if (text) add(g, "text", { x: axisX + 2, y: bottom - 2, class: "tag-text" }, text);
}

function drawArrow(g, [x, y, tx, ty]) {
  const angle = Math.atan2(ty - y, tx - x) * 180 / Math.PI - 90;
  const n = Math.hypot(tx - x, ty - y);
  add(g, "path", {
    d: `M0 0L10 9.5H5.5L7 ${n}L0 ${n - 9}L-7 ${n}L-5.5 9.5H-10Z`,
    transform: `translate(${X(x) + 0.5},${y}) rotate(${angle})`,
    class: "arrow"
  });
}

function drawPrice() {
  const g = startPanel("pricePanel", 70);
  const rows = [];
  for (let k = 0; k < 16; k++) rows.push(103 + k * 31.08);
  grid(g, 72, 598, rows);
  hline(g, 73.5, "level", 10);
  hline(g, 362.5, "cursor", 10);
  hline(g, 230.5, "last", 10, axisX + 40);

  curves.filter(c => c.type === "band").forEach(c => add(g, "path", { d: smoothPath(c.pts), class: "line band", stroke: c.color }));

  candles.forEach((text, i) => {
    const [, dir, top, bottom, high, low] = text.match(/^([rg])(\d+)-(\d+)(?:h(\d+))?(?:l(\d+))?$/);
    const x = barX(i) + 0.5;
    add(g, "line", { x1: x, x2: x, y1: high || top, y2: low || bottom, class: "candle" });
    add(g, "rect", { x: x - 2, y: +top + 0.5, width: 4, height: bottom - top - 1 || 1, fill: dir === "r" ? "#ff0000" : "#008000", class: "candle" });
  });

  stops.forEach(([x1, x2, y]) => hline(g, y, "stop", X(x1), X(x2)));
  curves.filter(c => c.type === "average").forEach(c => add(g, "path", { d: smoothPath(c.pts), class: "line average", stroke: c.color }));
  arrows.forEach(a => drawArrow(g, a));
  caption(g, 81, "ZCH4");

  // 4.7100 and 4.6500 sit under the price tags
  for (let k = 0; k < 16; k++) {
    if (k !== 4 && k !== 6) tick(g, 104 + k * 31.08, (4.83 - k * 0.03).toFixed(4));
  }
  tag(g, 70, 80, "#ff0000", "4.859", 23);
  tag(g, 224, 229, "#000000");
  tag(g, 212, 224, "#0000ff", "4.7191");
  tag(g, 245, 257, "#0000ff", "4.6875");
  tag(g, 228, 239, "#ff0000", "4.7041");
  tag(g, 237, 249, "#8b008b", "4.6954");
  tag(g, 290, 293, "#800080");
  tag(g, 278, 290, "#006400", "4.6555");
  tag(g, 292, 304, "#ff8000", "4.6418");
  tag(g, 351, 363, "#ff0000", "4.5844");
  tag(g, 367, 379, "#0000ff", "4.5694");
}

function drawCci() {
  const g = startPanel("cciPanel", 603);
  grid(g, 604, 710, [604, 621, 638, 674, 692, 709]);
  hline(g, 656.5, "zero");
  bars(g, cci, 657, "#9400d3");
  hline(g, 648, "level thick");
  hline(g, 666, "level thick");
  caption(g, 613, "Commodity Channel Index");
  ["180.0", "90.0", "0.0", "-90.0", "-180.0"].forEach((t, k) => tick(g, 621 + k * 17.8, t));
  tag(g, 621, 633, "#9400d3", "129.8");
}

function drawRsi() {
  const g = startPanel("rsiPanel", 714);
  grid(g, 714, 779, [714, 746, 763, 778]);
  [730.5, 754.5, 771.5].forEach(y => hline(g, y, "zero"));
  caption(g, 723, "Relative Strength Index");
  bars(g, rsi, 763, "#0a8f8f");
  hline(g, 742.5, "level");
  tick(g, 731, "80.0");
  tick(g, 746, "40.0");
  tick(g, 763, "0.0");
  tag(g, 720, 731, "#0a8f8f", "91.4");
}

function drawMacd() {
  const g = startPanel("macdPanel", 784);
  grid(g, 784, 888, [784, 797, 813, 828, 858, 873]);
  hline(g, 843.5, "zero");
  bars(g, histogram, 843, "#ff0000");
  plotSeries(g, signal, "#b000b0");
  plotSeries(g, macd, "#1414f0");
  caption(g, 792, "MACD");
  ["0.0300", "", "0.0100", "0.0000", "-0.0100", "-0.0200"].forEach((t, k) => tick(g, 798 + k * 15.2, t));
  tag(g, 809, 821, "#0000ff", "0.0191");
  tag(g, 815, 826, "#c000c0", "0.0152");
  tag(g, 833, 843, "#ff0000", "0.0039");
}

function drawWoodies() {
  const g = startPanel("woodiesPanel", 892);
  grid(g, 893, 987, [893, 907, 985, 986]);
  hline(g, 939.5, "zero");
  hline(g, 917, "level thick");
  hline(g, 923.5, "level");
  hline(g, 955.5, "level");
  hline(g, 971, "level thick");
  plotSeries(g, slow, "#f02020");
  plotSeries(g, fast, "#2020f0");
  caption(g, 902, "Woodies CCI");
  ["200.0", "", "0.0", "-100.0", "-200.0"].forEach((t, k) => tick(g, 907 + k * 15.9, t));
  tag(g, 906, 917, "#ff0000", "178.8");
  tag(g, 916, 927, "#0000ff", "121.2");
}

function drawTime() {
  const g = startPanel("timePanel", 987);
  dates.forEach((t, k) => {
    const x = barX((k + 1) * 6);
    add(g, "line", { x1: x + 0.5, x2: x + 0.5, y1: 987, y2: 989, class: "grid" });
    if (t) add(g, "text", { x: x - 1, y: 998, "text-anchor": "middle", class: "tick" }, t);
  });
  const x = X(515);
  add(g, "rect", { x, y: 988, width: 78, height: 11, fill: "#ff0000" });
  add(g, "text", { x: x + 2, y: 998, class: "tag-text" }, "Feb, 25 20:00:00");
}

function draw() {
  const width = document.querySelector(".charts").clientWidth;
  axisX = LEFT + width - 41;
  scale = (axisX - LEFT) / (AXIS - LEFT);
  drawPrice();
  drawCci();
  drawRsi();
  drawMacd();
  drawWoodies();
  drawTime();
}

draw();
window.addEventListener("resize", draw);
```
